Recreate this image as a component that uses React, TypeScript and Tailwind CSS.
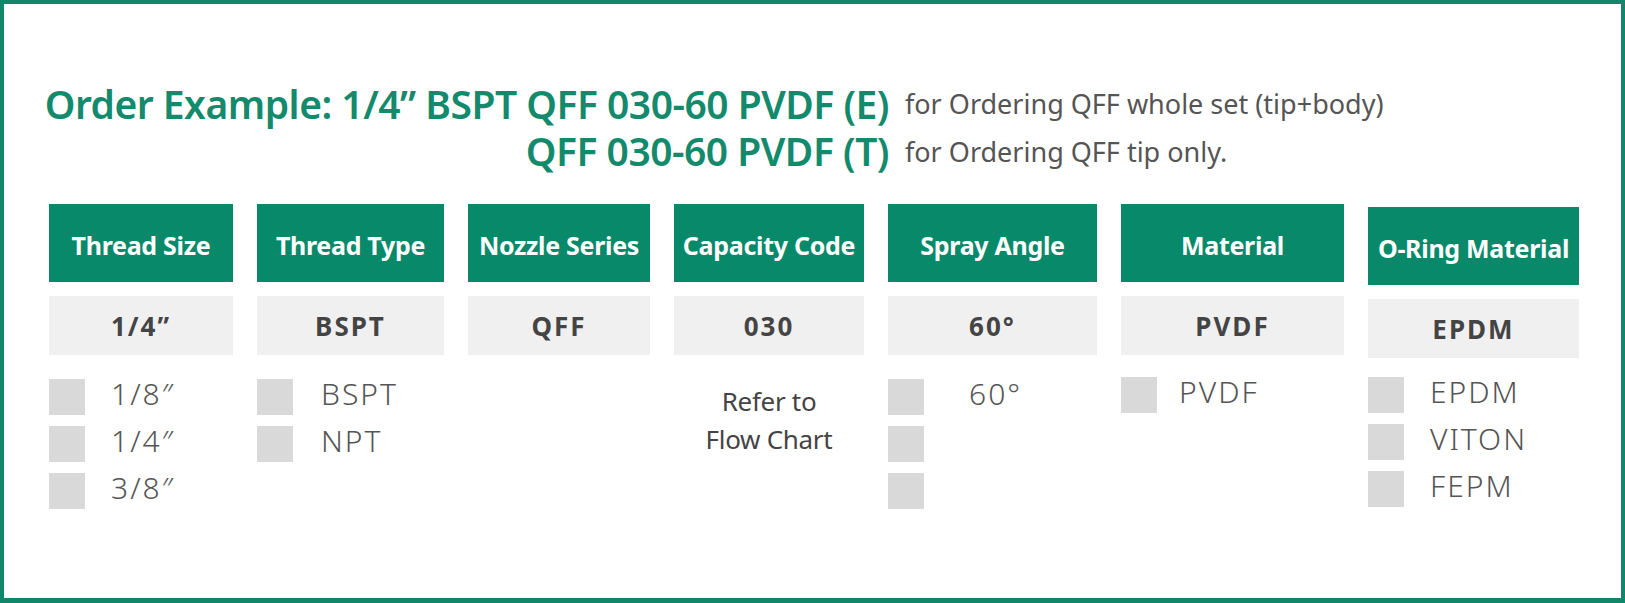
const font = { fontFamily: '"Noto Sans", "Liberation Sans", sans-serif' }

type Col = {
  title: string
  width: string
  value: string
  options: string[]
  textGap: string
  listTop: string
}

const columns: Col[] = [
  { title: 'Thread Size', width: 'w-[184px]', value: '1/4”', options: ['1/8″', '1/4″', '3/8″'], textGap: 'ml-[26px]', listTop: 'mt-[24px]' },
  { title: 'Thread Type', width: 'w-[187px]', value: 'BSPT', options: ['BSPT', 'NPT'], textGap: 'ml-[28px]', listTop: 'mt-[24px]' },
  { title: 'Nozzle Series', width: 'w-[182px]', value: 'QFF', options: [], textGap: 'ml-[26px]', listTop: 'mt-[24px]' },
  { title: 'Capacity Code', width: 'w-[190px]', value: '030', options: [], textGap: 'ml-[26px]', listTop: 'mt-[24px]' },
  { title: 'Spray Angle', width: 'w-[209px]', value: '60°', options: ['60°', '', ''], textGap: 'ml-[45px]', listTop: 'mt-[24px]' },
  { title: 'Material', width: 'w-[223px]', value: 'PVDF', options: ['PVDF'], textGap: 'ml-[22px]', listTop: 'mt-[22px]' },
  { title: 'O-Ring Material', width: 'w-[211px]', value: 'EPDM', options: ['EPDM', 'VITON', 'FEPM'], textGap: 'ml-[26px]', listTop: 'mt-[19px]' },
]

const Column = ({ col }: { col: Col }) => (
  <div className={`${col.width} flex flex-col`}>
    <div className={`${col.title === 'O-Ring Material' ? 'mt-[3px]' : ''} h-[78px] bg-[#08896a] flex items-center justify-center pt-[4px]`}>
      <span className="text-white text-[25px] font-bold tracking-[-0.3px] whitespace-nowrap leading-none">{col.title}</span>
    </div>
    <div className="mt-[14px] h-[59px] bg-[#f0f0f0] flex items-center justify-center">
      <span className="text-[#444] text-[26px] font-bold tracking-[2px] leading-none">{col.value}</span>
    </div>
    {col.title === 'Capacity Code' ? (
      <div className="mt-[27px] text-center text-[#444] text-[26px] leading-[38px] tracking-[-0.3px]">
        Refer to
        <br />
        Flow Chart
      </div>
    ) : (
      <ul className={`${col.listTop} flex flex-col gap-[11px] list-none`}>
        {col.options.map((opt, i) => (
          <li key={i} className="flex items-center h-[36px]">
            <span className="w-[36px] h-[36px] bg-[#d9d9d9] shrink-0" />
            {opt && (
              <span className={`${col.textGap} text-[#555] text-[30px] font-light tracking-[2px] leading-none -mt-[6px]`}>{opt}</span>
            )}
          </li>
        ))}
      </ul>
    )}
  </div>
)

export default function App() {
  return (
    <div style={font} className="w-[1625px] h-[603px] box-border border-4 border-b-[5px] border-[#12866a] bg-white">
      <div className="flex items-start pt-[76px]">
        <div className="w-[885px] text-right text-[#138a6c] text-[39px] font-semibold leading-[47px] tracking-[-0.5px] whitespace-nowrap">
          <div>Order Example: 1/4” BSPT QFF 030-60 PVDF (E)</div>
          <div>QFF 030-60 PVDF (T)</div>
        </div>
        <div className="ml-[16px] text-[#555] text-[27px] leading-[48px] whitespace-nowrap">
          <div>for Ordering QFF whole set (tip+body)</div>
          <div>for Ordering QFF tip only.</div>
        </div>
      </div>
      <div className="flex gap-[24px] pl-[45px] mt-[28px]">
        {columns.map((c) => (
          <Column key={c.title} col={c} />
        ))}
      </div>
    </div>
  )
}
